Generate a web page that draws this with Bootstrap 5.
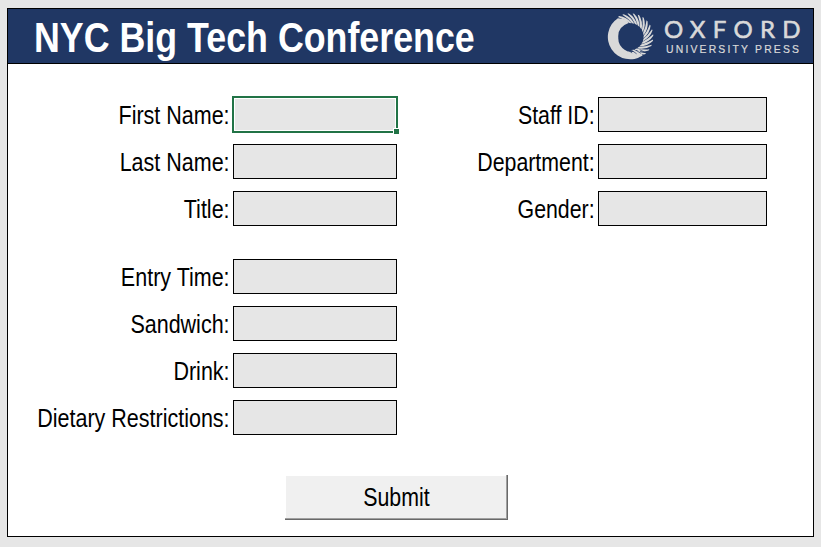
<!DOCTYPE html>
<html lang="en">
<head>
<meta charset="utf-8">
<meta name="viewport" content="width=device-width, initial-scale=1">
<title>NYC Big Tech Conference</title>
<link href="https://cdn.jsdelivr.net/npm/bootstrap@5.3.0/dist/css/bootstrap.min.css" rel="stylesheet">
<style>
  body { background: #e6e6e6; font-family: "Liberation Sans", Arial, sans-serif; color: #000; height: 547px; overflow: hidden; padding: 8px 7px 10px 7px; }
  .sheet { width: 807px; height: 529px; border: 1px solid #000; }
  .title-bar { height: 55px; background: #203764; border-bottom: 1px solid #000; padding-left: 26px; }
  .title-text { font-size: 42px; font-weight: 700; line-height: 54px; transform: scaleX(.852); transform-origin: left center; padding-top: 2px; }
  .form-area { padding-top: 33px; }
  .field-stack { display: grid; row-gap: 12px; }
  .left-stack { grid-template-columns: 221px 164px; column-gap: 4px; }
  .right-stack { grid-template-columns: 197px 169px; column-gap: 4px; }
  .gap-before { margin-top: 21px; }
  .field-label { display: flex; justify-content: flex-end; font-size: 26px; line-height: 36px; height: 35px; margin-right: -.6px; transform: scaleX(.827); transform-origin: right center; }
  .right-stack .field-label { transform: scaleX(.82); }
  .field-box { height: 35px; background: #e6e6e6; border: 1px solid #000; border-radius: 0; padding: 0; }
  .cell-wrap { position: relative; height: 35px; }
  .cell-wrap .field-box { width: 166px; height: 37px; margin: -1px; border: 2px solid #217346; box-shadow: inset 0 0 0 1px #fff; }
  .fill-handle { position: absolute; right: -3px; bottom: -3px; width: 7px; height: 7px; background: #217346; border: solid #fff; border-width: 1px; }
  .submit-btn { width: 223px; height: 45px; margin: 40px 0 0 277px; background: #f0f0f0; border: 0; border-radius: 0; padding: 0; color: #000; font-size: 26px; line-height: 43px;
    box-shadow: inset -1px -1px #696969, inset -2px -2px #a0a0a0, inset 1px 1px #fff; }
  .submit-btn span { display: inline-block; transform: scaleX(.82); }
</style>
</head>
<body>
<main class="sheet bg-white">
  <header class="title-bar d-flex justify-content-between align-items-start">
    <h1 class="title-text m-0 text-white text-nowrap">NYC Big Tech Conference</h1>
    <svg class="flex-shrink-0" width="208" height="54" viewBox="605 9 208 54" fill="#d9d9d9" role="img" aria-label="Oxford University Press">
      <defs><path id="ray" d="M623.2 14.4L624.6 13.9Q631.6 16.2 635.4 23.4L633 22.8Q629 18 623.2 14.4Z"/></defs>
      <g transform="translate(-.9 .4)">
      <path d="M618.8 17.8A22.4 22.4 0 0 0 643.5 55.2L640 49.6A13.8 13.8 0 0 1 619.2 37Q618.4 26.5 629.5 22.6L627 19Z"/>
      <use href="#ray" transform="rotate(-12 631 36.2)"/>
      <use href="#ray"/>
      <use href="#ray" transform="rotate(13 631 36.2)"/>
      <use href="#ray" transform="rotate(26 631 36.2)"/>
      <use href="#ray" transform="rotate(39 631 36.2)"/>
      <use href="#ray" transform="rotate(52 631 36.2)"/>
      <use href="#ray" transform="rotate(65 631 36.2)"/>
      <use href="#ray" transform="rotate(78 631 36.2)"/>
      <use href="#ray" transform="rotate(91 631 36.2)"/>
      <use href="#ray" transform="rotate(104 631 36.2)"/>
      <use href="#ray" transform="rotate(117 631 36.2)"/>
      <use href="#ray" transform="rotate(130 631 36.2)"/>
      <use href="#ray" transform="rotate(143 631 36.2)"/>
      <use href="#ray" transform="rotate(156 631 36.2)"/>
      <g stroke="#203764" stroke-width=".7" fill="none">
        <path d="M640.5 49.2L645 51.6M637 50L642 53M633 50.2L637.5 53.4M629 49.6L633 52.6M625.6 48L628.5 50.8"/>
      </g>
      </g>
      <text x="664" y="37.8" font-family="Lato, sans-serif" font-size="24" stroke="#d9d9d9" stroke-width=".6" textLength="136.5" lengthAdjust="spacing">OXFORD</text>
      <text x="666" y="52.5" font-family="Liberation Sans, sans-serif" font-size="10.4" stroke="#d9d9d9" stroke-width=".2" textLength="133" lengthAdjust="spacing">UNIVERSITY PRESS</text>
    </svg>
  </header>
  <form class="form-area" onsubmit="return false">
    <div class="d-flex align-items-start">
      <div class="field-stack left-stack">
        <label class="field-label text-nowrap" for="first">First Name:</label>
        <div class="cell-wrap"><input class="field-box d-block" id="first"><span class="fill-handle"></span></div>
        <label class="field-label text-nowrap" for="last">Last Name:</label><input class="field-box" id="last">
        <label class="field-label text-nowrap" for="title">Title:</label><input class="field-box" id="title">
        <label class="field-label text-nowrap gap-before" for="entry">Entry Time:</label><input class="field-box gap-before" id="entry">
        <label class="field-label text-nowrap" for="sandwich">Sandwich:</label><input class="field-box" id="sandwich">
        <label class="field-label text-nowrap" for="drink">Drink:</label><input class="field-box" id="drink">
        <label class="field-label text-nowrap" for="diet">Dietary Restrictions:</label><input class="field-box" id="diet">
      </div>
      <div class="field-stack right-stack">
        <label class="field-label text-nowrap" for="staff">Staff ID:</label><input class="field-box" id="staff">
        <label class="field-label text-nowrap" for="dept">Department:</label><input class="field-box" id="dept">
        <label class="field-label text-nowrap" for="gender">Gender:</label><input class="field-box" id="gender">
      </div>
    </div>
    <button class="submit-btn d-block text-center" type="submit"><span>Submit</span></button>
  </form>
</main>
<script src="https://cdn.jsdelivr.net/npm/bootstrap@5.3.0/dist/js/bootstrap.bundle.min.js"></script>
</body>
</html>
